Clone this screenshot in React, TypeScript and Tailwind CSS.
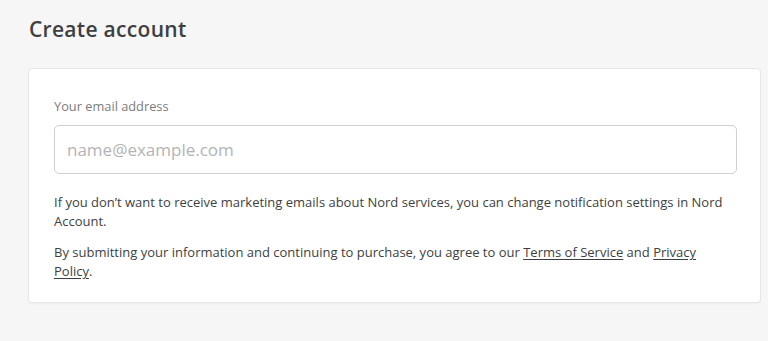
export default function App() {
  return (
    <div className="min-h-[341px] bg-[#f6f6f6] px-[28px] pt-[14px] pb-[40px] font-['Open_Sans',sans-serif] text-[#3e3f42]">
      <h1 className="text-[21px] font-semibold leading-[30px] tracking-[0.3px] text-[#3e3f42] pl-[1px]">Create account</h1>
      <div className="mt-[24px] w-[733px] rounded-[4px] border border-[#e6e6e6] bg-white px-[25px] pt-[29px] pb-[21px] shadow-[0_1px_2px_rgba(0,0,0,0.04)]">
        <label className="block text-[12.8px] leading-[16px] text-[#7c7d80]">Your email address</label>
        <input
          type="email"
          placeholder="name@example.com"
          className="mt-[11px] h-[49px] w-[683px] rounded-[5px] border border-[#cfd0d2] px-[12px] text-[17px] text-[#3e3f42] placeholder:text-[#b3b4b6] outline-none"
        />
        <p className="mt-[19px] text-[13px] leading-[19px]">
          If you don’t want to receive marketing emails about Nord services, you can change notification settings in Nord Account.
        </p>
        <p className="mt-[12px] text-[13px] leading-[19px]">
          By submitting your information and continuing to purchase, you agree to our{' '}
          <a href="#" className="underline underline-offset-2">Terms of Service</a> and{' '}
          <a href="#" className="underline underline-offset-2">Privacy</a>{' '}
          <a href="#" className="underline underline-offset-2">Policy</a>.
        </p>
      </div>
    </div>
  );
}
